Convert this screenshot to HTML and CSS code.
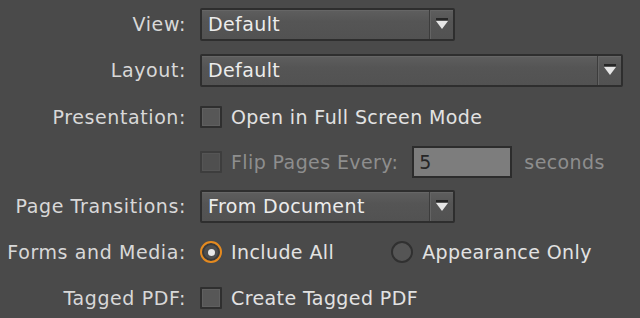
FILE: index.html
```html
<!DOCTYPE html>
<html lang="en">
<head>
    <meta charset="UTF-8">
    <meta name="viewport" content="width=device-width, initial-scale=1.0">
    <title>PDF Export Options</title>
    <link rel="stylesheet" href="styles.css">
</head>
<body>

    <div class="panel">
        <div class="row">
            <div class="label">View:</div>
            <div class="field">
                <div class="select select-short">
                    <span class="select-value">Default</span>
                    <span class="select-arrow">
                        <svg width="14" height="14" viewBox="0 0 14 14"><rect x="1" y="1" width="12" height="2" fill="#262626"/><path d="M1 4 H13 L7 12 Z" fill="#e6e6e6"/></svg>
                    </span>
                </div>
            </div>
        </div>

        <div class="row">
            <div class="label">Layout:</div>
            <div class="field">
                <div class="select select-long">
                    <span class="select-value">Default</span>
                    <span class="select-arrow">
                        <svg width="14" height="14" viewBox="0 0 14 14"><rect x="1" y="1" width="12" height="2" fill="#262626"/><path d="M1 4 H13 L7 12 Z" fill="#e6e6e6"/></svg>
                    </span>
                </div>
            </div>
        </div>

        <div class="row row-presentation">
            <div class="label">Presentation:</div>
            <div class="field">
                <span class="checkbox"></span>
                <span class="option-text">Open in Full Screen Mode</span>
            </div>
        </div>

        <div class="row row-flip">
            <div class="label"></div>
            <div class="field">
                <span class="checkbox disabled"></span>
                <span class="option-text dim">Flip Pages Every:</span>
                <span class="number-input">5</span>
                <span class="option-text dim">seconds</span>
            </div>
        </div>

        <div class="row">
            <div class="label">Page Transitions:</div>
            <div class="field">
                <div class="select select-short">
                    <span class="select-value">From Document</span>
                    <span class="select-arrow">
                        <svg width="14" height="14" viewBox="0 0 14 14"><rect x="1" y="1" width="12" height="2" fill="#262626"/><path d="M1 4 H13 L7 12 Z" fill="#e6e6e6"/></svg>
                    </span>
                </div>
            </div>
        </div>

        <div class="row">
            <div class="label">Forms and Media:</div>
            <div class="field">
                <span class="radio checked"><span class="radio-dot"></span></span>
                <span class="option-text radio-first">Include All</span>
                <span class="radio"></span>
                <span class="option-text">Appearance Only</span>
            </div>
        </div>

        <div class="row">
            <div class="label">Tagged PDF:</div>
            <div class="field">
                <span class="checkbox"></span>
                <span class="option-text">Create Tagged PDF</span>
            </div>
        </div>
    </div>

</body>
</html>
```

FILE: styles.css
```css
/* Общие стили */
body {
    margin: 0;
    padding: 0;
    background-color: #4a4a4a;
    color: #d8d8d8;
    font-family: 'DejaVu Sans', sans-serif;
    font-size: 19px;
    letter-spacing: 0.4px;
    overflow: hidden;
}

.panel {
    padding-top: 1px;
}

.row {
    display: grid;
    grid-template-columns: 186px 1fr;
    column-gap: 14px;
    align-items: center;
    height: 46px;
}

.row-presentation {
    height: 48px;
}

.row-flip {
    height: 42px;
}

.label {
    text-align: right;
    white-space: nowrap;
    letter-spacing: 0.6px;
}

.field {
    display: flex;
    align-items: center;
    white-space: nowrap;
}

/* Выпадающие списки */
.select {
    display: flex;
    align-items: stretch;
    height: 33px;
    box-sizing: border-box;
    border: 2px solid #2e2e2e;
    border-radius: 2px;
    background: linear-gradient(#5e5e5e, #555555 40%, #525252);
    box-shadow: inset 0 1px 0 #666;
    color: #ececec;
}

.select-short {
    width: 255px;
}

.select-long {
    width: 423px;
}

.select-value {
    flex: 1;
    padding-left: 6px;
    line-height: 29px;
}

.select-arrow {
    width: 23px;
    display: flex;
    align-items: center;
    justify-content: center;
    border-left: 1px solid #3c3c3c;
    box-shadow: inset 1px 0 0 #646464;
}

/* Флажки и переключатели */
.checkbox {
    width: 22px;
    height: 22px;
    box-sizing: border-box;
    border: 2px solid #2f2f2f;
    background: #575757;
    box-shadow: inset 0 0 0 1px #606060;
    border-radius: 1px;
    flex-shrink: 0;
}

.checkbox.disabled {
    border-color: #3d3d3d;
    background: #4f4f4f;
    box-shadow: inset 0 0 0 1px #555;
}

.option-text {
    margin-left: 9px;
    color: #e2e2e2;
}

.option-text.dim {
    color: #8e8e8e;
}

.number-input {
    width: 100px;
    height: 32px;
    box-sizing: border-box;
    margin-left: 14px;
    margin-right: 3px;
    padding-left: 5px;
    border: 2px solid #2c2c2c;
    background: #7d7d7d;
    color: #262626;
    line-height: 28px;
}

.radio {
    width: 22px;
    height: 22px;
    box-sizing: border-box;
    border-radius: 50%;
    border: 2px solid #303030;
    background: #555;
    display: flex;
    align-items: center;
    justify-content: center;
    flex-shrink: 0;
}

.radio.checked {
    border: 2px solid #e58a1f;
    background: #4e4e4e;
    box-shadow: inset 0 0 0 2px #3a3a3a;
}

.radio-dot {
    width: 7px;
    height: 7px;
    border-radius: 50%;
    background: #e8e8e8;
}

.radio-first {
    margin-right: 57px;
}
```
